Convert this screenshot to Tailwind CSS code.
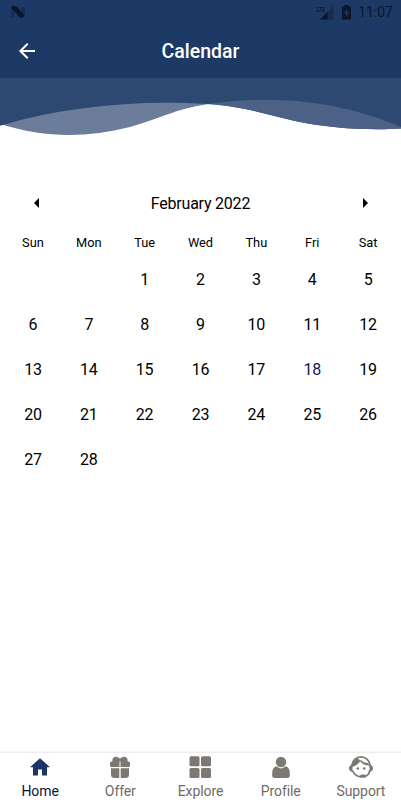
<!DOCTYPE html>
<html lang="en">
    <head>
        <meta charset="utf-8">
        <title>Calendar</title>
        <meta name="viewport" content="initial-scale=1, width=device-width, viewport-fit=cover">
        <script src="https://cdn.jsdelivr.net/npm/@tailwindcss/browser@4"></script>
    </head>
    <body class="h-screen overflow-hidden bg-white font-['Roboto',sans-serif] text-black flex flex-col">
        <header class="h-[78px] shrink-0 bg-[#1d3965]">
            <!-- status bar -->
            <div class="h-6 flex items-center pl-[11px] pr-2">
                <svg class="w-3.5 h-3" viewBox="0 0 14 12">
                    <path fill="#172c50" d="M0 1 4 0v10.500L0 11.500zM10 1.500l4-1V11l-4 .5z"/>
                    <path fill="#0b1729" d="M0 1.500Q2.500-1 5.500 .5L14 9.500q-2.500 3-5.500 1.500z"/>
                </svg>
                <svg class="w-[18px] h-[15px] ml-auto" viewBox="0 0 18 15">
                    <path fill="#162b4d" d="M17.500 1v13.500H4z"/>
                    <path fill="#0b1729" d="M11.500 7v7.500H4z"/>
                    <text x="0.500" y="7.300" textLength="9" lengthAdjust="spacingAndGlyphs" font-size="8" font-weight="500" fill="#0b1729">LTE</text>
                </svg>
                <svg class="w-[9px] h-[15px] ml-2" viewBox="0 0 9 15">
                    <path fill="#0b1729" d="M2.500 0h4v1.500H9V14.500H0V1.500h2.500z"/>
                    <path fill="#1d3965" d="M5.200 3.500 2 8.600h2V12.500l3.200-5.200H5.200z"/>
                </svg>
                <span class="ml-[7px] text-[14px] leading-6 text-[#0b1729]">11:07</span>
            </div>
            <div class="h-[54px] grid grid-cols-[56px_1fr_56px]">
                <button class="pl-[19px] pt-[19px] flex items-start">
                    <svg class="w-4 h-4" viewBox="0 0 16 16" fill="none" stroke="#fff" stroke-width="2">
                        <path d="M16 8H2M8.700 .7 1.400 8l7.300 7.300"/>
                    </svg>
                </button>
                <h1 class="text-center text-[19.500px] leading-[54px] font-medium text-white pt-px">Calendar</h1>
            </div>
        </header>

        <svg class="w-full h-[62px] shrink-0" viewBox="0 0 401 62" preserveAspectRatio="none">
            <path fill="#6c7d9b" d="M0 46C45 60 85 60 130 49C162 40 180 29 213 25.500L160 20 0 40z"/>
            <path fill="#2d4871" d="M0 0H401V50.500C370 52.500 330 50.500 295 43C266 36.500 245 28.500 207 26C140 21.500 65 28 0 47.700z"/>
            <path fill="#4c6186" d="M209 26C270 17 335 21 401 49V50.500C370 52.500 330 50.500 295 43C266 36.500 245 28.500 209 26z"/>
        </svg>

        <main class="grow px-[5px] pt-[41px]">
            <div class="h-[45px] flex items-center justify-between px-[28.500px]">
                <button class="mb-0.5">
                    <svg class="w-[5px] h-[10px]" viewBox="0 0 5 10"><path d="M5 0v10L0 5z"/></svg>
                </button>
                <h2 class="text-[16px] leading-[45px] tracking-[-0.22px]">February 2022</h2>
                <button class="mb-0.5">
                    <svg class="w-[5px] h-[10px]" viewBox="0 0 5 10"><path d="M0 0v10l5-5z"/></svg>
                </button>
            </div>
            <div class="grid grid-cols-7 text-center text-[12.800px] leading-[31px] h-[31px] pt-px">
                <span>Sun</span>
                <span>Mon</span>
                <span>Tue</span>
                <span>Wed</span>
                <span>Thu</span>
                <span>Fri</span>
                <span>Sat</span>
            </div>
            <div class="grid grid-cols-7 text-center text-[16px] leading-[45px] tracking-[-0.2px]">
                <span class="col-start-3">1</span>
                <span>2</span>
                <span>3</span>
                <span>4</span>
                <span>5</span>
                <span>6</span>
                <span>7</span>
                <span>8</span>
                <span>9</span>
                <span>10</span>
                <span>11</span>
                <span>12</span>
                <span>13</span>
                <span>14</span>
                <span>15</span>
                <span>16</span>
                <span>17</span>
                <span class="text-[#101a5c]">18</span>
                <span>19</span>
                <span>20</span>
                <span>21</span>
                <span>22</span>
                <span>23</span>
                <span>24</span>
                <span>25</span>
                <span>26</span>
                <span>27</span>
                <span>28</span>
            </div>
        </main>

        <nav class="h-12 shrink-0 border-t border-[#eeeeee] shadow-[0_-1px_1px_#f7f7f7] grid grid-cols-5 text-[14px] leading-[18px] tracking-[-0.1px] text-[#6f6b67]">
            <a class="flex flex-col items-center pt-[3px] text-[#0b1540]">
                <svg class="w-6 h-[23px] mb-[3px]" viewBox="0 0 24 23" fill="#1c3668">
                    <path d="M12 2.200 22 11.200h-3V19.500h-5V13.500h-4V19.500H5V11.200H2z"/>
                </svg>
                Home
            </a>
            <a class="flex flex-col items-center pt-[3px]">
                <svg class="w-6 h-[23px] mb-[3px]" viewBox="0 0 24 23" fill="#7c7973">
                    <path d="M3.500 5.500H4.500C3.500 2 7-.5 10 1.200Q11.500 2 12 3Q12.500 2 14 1.200C17-.5 20.500 2 19.500 5.500H20.500Q22 5.500 22 7V9.500Q22 11 20.500 11H12.500V5.500H11.500V11H3.500Q2 11 2 9.500V7Q2 5.500 3.500 5.500z"/>
                    <path d="M3 12.200h8.300V22H6.500Q3 22 3 18.500zM12.700 12.200H21v6.300Q21 22 17.500 22h-4.800z"/>
                </svg>
                Offer
            </a>
            <a class="flex flex-col items-center pt-[3px]">
                <svg class="w-6 h-[23px] mb-[3px]" viewBox="0 0 24 23" fill="#7c7973">
                    <rect x="1.500" y=".3" width="10" height="10" rx="1.500"/>
                    <rect x="13" y=".3" width="10" height="10" rx="1.500"/>
                    <rect x="1.500" y="12" width="10" height="10" rx="1.500"/>
                    <rect x="13" y="12" width="10" height="10" rx="1.500"/>
                </svg>
                Explore
            </a>
            <a class="flex flex-col items-center pt-[3px]">
                <svg class="w-6 h-[23px] mb-[3px]" viewBox="0 0 24 23" fill="#7c7973">
                    <circle cx="12" cy="6" r="5.200"/>
                    <path d="M7.500 10.300Q12 14.500 16.500 10.300Q20.800 11.500 20.800 17V19.500Q20.800 22 18 22H6Q3.200 22 3.200 19.500V17Q3.200 11.500 7.500 10.300z"/>
                </svg>
                Profile
            </a>
            <a class="flex flex-col items-center pt-[3px]">
                <svg class="w-6 h-[23px] mb-[3px]" viewBox="0 0 24 23" fill="#7c7973">
                    <path fill="none" stroke="#7c7973" stroke-width="1.800" d="M3 10.500C3-2.300 21-2.300 21 10.500M3.500 14.500Q6 20.300 12 20.800M20.500 14.500Q20.500 19.700 15 20.300"/>
                    <path d="M3.500 11C3.500 6 5 3.500 8.500 2.200L11.500 4.500Q9 9.500 3.500 11zM10.500 4.500Q14 9.500 20.500 9.500L19 7Q14.500 7 12 4z"/>
                    <path d="M3.500 8.500V16Q0 15.500 0 12.300Q0 9.500 3.500 8.500zM20.500 8.500V16Q24 15.500 24 12.300Q24 9.500 20.500 8.500z"/>
                    <circle cx="8.800" cy="12.500" r="1.300"/>
                    <circle cx="15.200" cy="12.500" r="1.300"/>
                    <rect x="11" y="18.600" width="6" height="3.200" rx="1.600"/>
                </svg>
                Support
            </a>
        </nav>
    </body>
</html>
